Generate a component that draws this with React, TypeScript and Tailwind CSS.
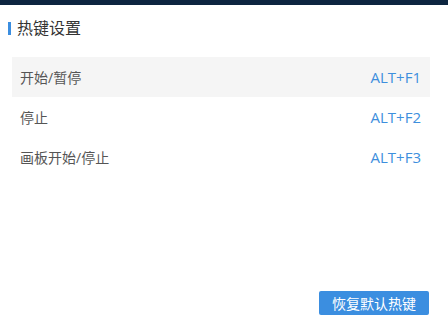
const rows = [
  { name: "开始/暂停", key: "ALT+F1" },
  { name: "停止", key: "ALT+F2" },
  { name: "画板开始/停止", key: "ALT+F3" },
]

export default function App() {
  return (
    <div
      className="flex h-[324px] w-[448px] flex-col bg-white"
      style={{ fontFamily: '"Open Sans", "Noto Sans CJK SC", sans-serif' }}
    >
      <div className="h-[5px] bg-[#0d2540]" />
      <div className="flex h-[46px] items-center pl-2">
        <span className="h-[13px] w-[3px] bg-[#3b8ee0]" />
        <span className="ml-[6px] text-[16px] text-[#333]">热键设置</span>
      </div>
      <div className="ml-3 mr-[18px] mt-[6px] flex flex-col">
        {rows.map((r, i) => (
          <div
            key={r.name}
            className={`flex h-10 items-center justify-between pl-2 pr-[9px] ${i === 0 ? "bg-[#f5f5f5]" : ""}`}
          >
            <span className="text-[14px] text-[#555]">{r.name}</span>
            <span className="text-[15px] text-[#3d8fdd]">{r.key}</span>
          </div>
        ))}
      </div>
      <div className="mt-auto mb-[9px] mr-[19px] flex justify-end">
        <button className="h-6 w-[110px] rounded-[2px] bg-[#3b8ee0] text-[14px] text-white">
          恢复默认热键
        </button>
      </div>
    </div>
  )
}
